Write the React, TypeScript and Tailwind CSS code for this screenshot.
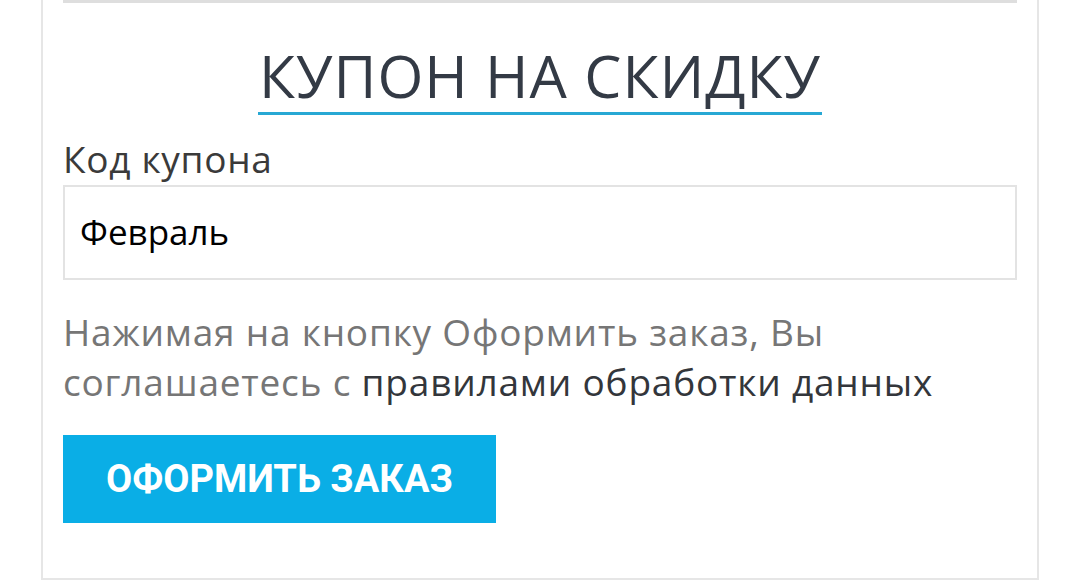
import React from "react";

export default function App() {
  return (
    <div className="w-[1080px] h-[586px] bg-white overflow-hidden relative">
      <div className="ml-[41px] w-[998px] h-[580px] border-2 border-t-0 border-[#e6e6e6] px-[20px]">
        <div className="h-[3px] bg-[#dedede]" />
        <div className="flex justify-center mt-[40px]">
          <h2
            className="inline-block text-[59px] leading-[64px] text-[#333a45] border-b-[3px] border-[#27a8d4] pb-[5px] px-[1px] tracking-[1px]"
            style={{ fontFamily: '"Open Sans", sans-serif' }}
          >
            КУПОН НА СКИДКУ
          </h2>
        </div>
        <label
          className="block mt-[24px] text-[37px] leading-[40px] text-[#3a3a3a] tracking-[0.7px]"
          style={{ fontFamily: '"Open Sans", sans-serif' }}
        >
          Код купона
        </label>
        <div
          className="mt-[6px] h-[95px] border-2 border-[#e3e3e3] flex items-center pl-[15px] text-[35px] text-black"
          style={{ fontFamily: '"Open Sans", sans-serif' }}
        >
          Февраль
        </div>
        <p
          className="mt-[27px] text-[37px] leading-[50px] text-[#767676] tracking-[0.8px]"
          style={{ fontFamily: '"Open Sans", sans-serif' }}
        >
          Нажимая на кнопку Оформить заказ, Вы
          <br />
          соглашаетесь с <span className="text-[#33363b]">правилами обработки данных</span>
        </p>
        <button
          className="mt-[28px] w-[433px] h-[88px] bg-[#0aaee6] text-white font-bold text-[38px] uppercase flex items-center justify-center"
          style={{ fontFamily: 'Roboto, sans-serif' }}
        >
          ОФОРМИТЬ ЗАКАЗ
        </button>
      </div>
    </div>
  );
}
